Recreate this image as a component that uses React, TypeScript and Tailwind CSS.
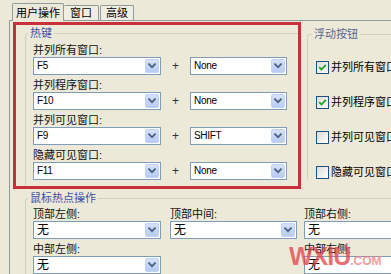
import React from "react";

function Chevron() {
  return (
    <svg width="8" height="6" viewBox="0 0 8 6" fill="none">
      <path d="M1 1.2 L4 4.2 L7 1.2" stroke="#4d6185" strokeWidth="1.8" strokeLinecap="square" />
    </svg>
  );
}

function Combo({ value, className, cjk, arrow = true }: { value: string; className: string; cjk?: boolean; arrow?: boolean }) {
  return (
    <div className={`flex h-[18px] shrink-0 items-stretch border border-[#7f9db9] bg-white ${className}`}>
      <div
        className={`flex flex-1 items-center pl-[3px] text-black ${
          cjk ? "text-[12px] leading-[14px]" : "text-[10px] leading-[12px] tracking-[-0.3px]"
        }`}
      >
        {value}
      </div>
      {arrow && (
        <div className="m-[1px] flex w-[14px] items-center justify-center rounded-[2px] border border-[#c4d2f2] bg-gradient-to-b from-[#d6e2fd] to-[#b7cbf5]">
          <Chevron />
        </div>
      )}
    </div>
  );
}

function Check({ checked, label }: { checked?: boolean; label: string }) {
  return (
    <div className="flex h-[14px] items-center gap-[2px]">
      <div className="flex h-[13px] w-[13px] shrink-0 items-center justify-center border border-[#1c5180] bg-gradient-to-br from-[#dcdcd5] to-white">
        {checked && (
          <svg width="9" height="9" viewBox="0 0 9 9" fill="none">
            <path d="M1.2 4.2 L3.5 6.5 L7.8 1.8" stroke="#21a121" strokeWidth="1.8" />
          </svg>
        )}
      </div>
      <span className="whitespace-nowrap text-[11px] leading-[14px] text-black">{label}</span>
    </div>
  );
}

function HotkeyRow({ label, key1, key2 }: { label: string; key1: string; key2: string }) {
  return (
    <div className="flex flex-col">
      <div className="h-[14px] whitespace-nowrap text-[11px] leading-[14px] text-[#111]">{label}</div>
      <div className="flex items-center">
        <Combo value={key1} className="w-[128px]" />
        <span className="w-[29px] text-center text-[12px] leading-[14px] text-[#333]">+</span>
        <Combo value={key2} className="w-[97px]" />
      </div>
    </div>
  );
}

function MouseCell({ label, combo, arrow = true }: { label: string; combo: string; arrow?: boolean }) {
  return (
    <div className="flex flex-col">
      <div className="h-[14px] whitespace-nowrap text-[11px] leading-[14px] text-[#111]">{label}</div>
      <Combo value="无" cjk className={combo} arrow={arrow} />
    </div>
  );
}

export default function App() {
  return (
    <div
      className="relative flex h-[274px] w-[391px] flex-col overflow-hidden bg-[#ece9d8]"
      style={{ fontFamily: '"Liberation Sans", "Noto Sans CJK SC", sans-serif' }}
    >
      {/* tabs */}
      <div className="flex h-[20px] shrink-0 items-end pl-[12px]">
        <div className="relative z-10 -mb-px flex h-[18px] w-[52px] items-center justify-center rounded-t-[2px] border-x border-t border-[#919b9c] bg-[#ece9d8] text-[11px] leading-[14px] text-black">
          用户操作
        </div>
        <div className="flex h-[15px] w-[35px] items-center justify-center rounded-t-[2px] border-r border-t border-[#919b9c] bg-[#f0eee3] text-[11px] leading-[14px] text-black">
          窗口
        </div>
        <div className="ml-px flex h-[15px] w-[34px] items-center justify-center rounded-t-[2px] border-x border-t border-[#919b9c] bg-[#f0eee3] text-[11px] leading-[14px] text-black">
          高级
        </div>
      </div>

      {/* panel */}
      <div className="ml-[9px] flex flex-1 flex-col border-l border-t border-[#919b9c] pl-[3px]">
        <div className="flex items-start">
          {/* red annotation box with hotkey group */}
          <div className="mt-px flex h-[167px] w-[288px] shrink-0 border-[3px] border-[#c8303c] pl-[9px] pt-px">
            <fieldset className="flex-1 rounded-tl-[3px] border-l border-t border-[#d0d0bf] pl-[2px]">
              <legend className="px-[2px] text-[11px] leading-[14px] text-[#3e4fa6]">热键</legend>
              <div className="ml-[5px] mt-[3px] flex flex-col gap-[3px]">
                <HotkeyRow label="并列所有窗口:" key1="F5" key2="None" />
                <HotkeyRow label="并列程序窗口:" key1="F10" key2="None" />
                <HotkeyRow label="并列可见窗口:" key1="F9" key2="SHIFT" />
                <HotkeyRow label="隐藏可见窗口:" key1="F11" key2="None" />
              </div>
            </fieldset>
          </div>

          {/* floating buttons group */}
          <fieldset className="ml-[6px] mt-[6px] w-[100px] shrink-0 rounded-tl-[3px] border-l border-t border-[#d0d0bf] pl-[4px]">
            <legend className="px-[2px] text-[11px] leading-[14px] text-[#5a6893]">浮动按钮</legend>
            <div className="ml-[4px] mt-[19px] flex flex-col gap-[21px]">
              <Check checked label="并列所有窗口" />
              <Check checked label="并列程序窗口" />
              <Check label="并列可见窗口" />
              <Check label="隐藏可见窗口" />
            </div>
          </fieldset>
        </div>

        {/* mouse hotspot group */}
        <fieldset className="ml-[12px] mt-[2px] rounded-tl-[3px] border-l border-t border-[#d0d0bf] pl-[2px]">
          <legend className="px-[2px] text-[11px] leading-[14px] text-[#3e4fa6]">鼠标热点操作</legend>
          <div className="ml-[5px] mt-[2px] grid grid-cols-[137px_134px_1fr] gap-y-[3px]">
            <MouseCell label="顶部左侧:" combo="w-[128px]" />
            <MouseCell label="顶部中间:" combo="w-[127px]" />
            <MouseCell label="顶部右侧:" combo="w-[100px]" arrow={false} />
            <MouseCell label="中部左侧:" combo="w-[128px]" />
            <div />
            <MouseCell label="中部右侧:" combo="w-[100px]" arrow={false} />
          </div>
        </fieldset>
      </div>

      {/* watermark */}
      <div className="pointer-events-none absolute left-[289px] top-[244px] flex items-baseline opacity-75">
        <span className="text-[25px] font-bold leading-none tracking-[-1px] text-[#e2404a]">WXIU</span>
        <span className="text-[12px] font-bold leading-none text-[#ee8080]">.COM</span>
      </div>
    </div>
  );
}
